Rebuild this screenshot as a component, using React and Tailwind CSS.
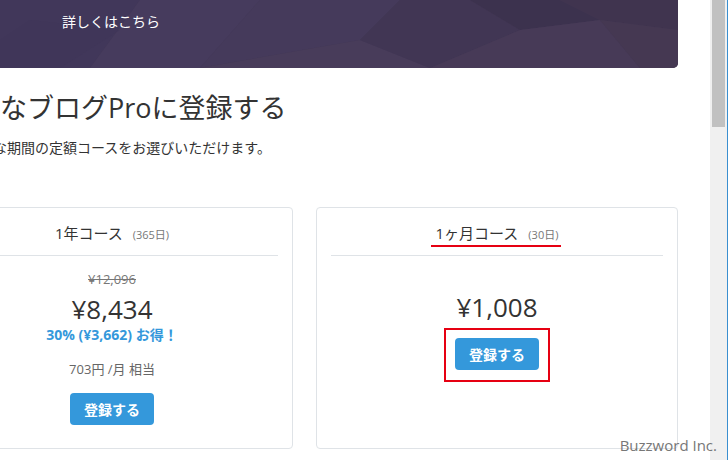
const FONT = "font-['Open_Sans','Noto_Sans_CJK_JP',sans-serif]";

function Banner() {
  return (
    <div className="relative h-[68px] w-[678px] overflow-hidden rounded-br-[5px] bg-[#433955]">
      {/* low-poly texture */}
      <svg className="absolute inset-0" width="678" height="68" viewBox="0 0 678 68">
        <polygon points="0,0 140,0 90,68 0,68" fill="#41375a" />
        <polygon points="140,0 260,0 200,68 90,68" fill="#463b5d" />
        <polygon points="260,0 400,0 360,40 200,68" fill="#453a5b" />
        <polygon points="360,40 430,68 200,68" fill="#483c5a" />
        <polygon points="400,0 470,0 520,30 430,68 360,40" fill="#413654" />
        <polygon points="470,0 560,0 600,20 520,30" fill="#3c324e" />
        <polygon points="520,30 600,20 640,68 430,68" fill="#473a57" />
        <polygon points="560,0 678,0 678,30 600,20" fill="#40344f" />
        <polygon points="600,20 678,30 678,68 640,68" fill="#453852" />
        <polygon points="30,20 120,30 60,68 0,68 0,40" fill="#3f3558" opacity="0.6" />
      </svg>
      <span className="absolute left-[62px] top-[12px] text-[14px] leading-[20px] text-white">詳しくはこちら</span>
    </div>
  );
}

function Button() {
  return (
    <button className="h-[32px] w-[84px] rounded-[4px] bg-[#3498db] text-[14px] font-bold text-white">
      登録する
    </button>
  );
}

function CardHeader({ title, days, mark }) {
  return (
    <div className="flex justify-center border-b border-[#dfe3e7] pt-[15px] pb-[10px]">
      <span className="relative leading-[20px] text-[#333]">
        <span className="text-[15px]">{title}</span>
        <span className="ml-[10px] text-[11px] text-[#777]">({days})</span>
        {mark && <span className="absolute left-[-5px] right-[-3px] top-[22px] h-[2px] bg-[#e60012]" />}
      </span>
    </div>
  );
}

export default function App() {
  return (
    <div className={`relative h-[460px] w-[728px] overflow-hidden bg-white ${FONT}`}>
      <Banner />

      <h1 className="mt-[20px] text-[27px] leading-[40px] text-[#333]">なブログProに登録する</h1>
      <p className="ml-[-7px] mt-[10px] text-[14px] leading-[20px] text-[#333]">
        な期間の定額コースをお選びいただけます。
      </p>

      <div className="ml-[-69px] mt-[49px] flex gap-[23px]">
        {/* 1 year */}
        <div className="flex h-[242px] w-[362px] flex-col rounded-[4px] border border-[#dfe3e7] px-[14px]">
          <CardHeader title="1年コース" days="365日" />
          <div className="flex flex-col items-center">
            <div className="mt-[13px] text-[13px] leading-[20px] text-[#777] line-through">¥12,096</div>
            <div className="mt-[2px] text-[26px] leading-[36px] text-[#333]">¥8,434</div>
            <div className="mt-[-2px] text-[14px] font-bold leading-[20px] text-[#3498db]">30% (¥3,662) お得！</div>
            <div className="mt-[14px] text-[13px] leading-[20px] text-[#666]">703円 /月 相当</div>
            <div className="mt-[14px]">
              <Button />
            </div>
          </div>
        </div>

        {/* 1 month */}
        <div className="flex h-[242px] w-[362px] flex-col rounded-[4px] border border-[#dfe3e7] px-[14px]">
          <CardHeader title="1ヶ月コース" days="30日" mark />
          <div className="flex flex-col items-center">
            <div className="mt-[33px] text-[26px] leading-[36px] text-[#333]">¥1,008</div>
            <div className="mt-[3px] border-2 border-[#e60012] px-[9px] pt-[8px] pb-[10px]">
              <Button />
            </div>
          </div>
        </div>
      </div>

      {/* scrollbar */}
      <div className="absolute right-0 top-0 flex h-full w-[18px]">
        <div className="h-full w-[17px] bg-[#f0f0f0] pl-[2px] pr-[2px]">
          <div className="h-[127px] w-[13px] bg-[#c1c1c1]" />
        </div>
        <div className="h-full w-[1px] bg-[#3a8fd0]" />
      </div>

      <span className="absolute right-[11px] bottom-[4px] text-[15px] leading-[22px] text-[#777]">Buzzword Inc.</span>
    </div>
  );
}
